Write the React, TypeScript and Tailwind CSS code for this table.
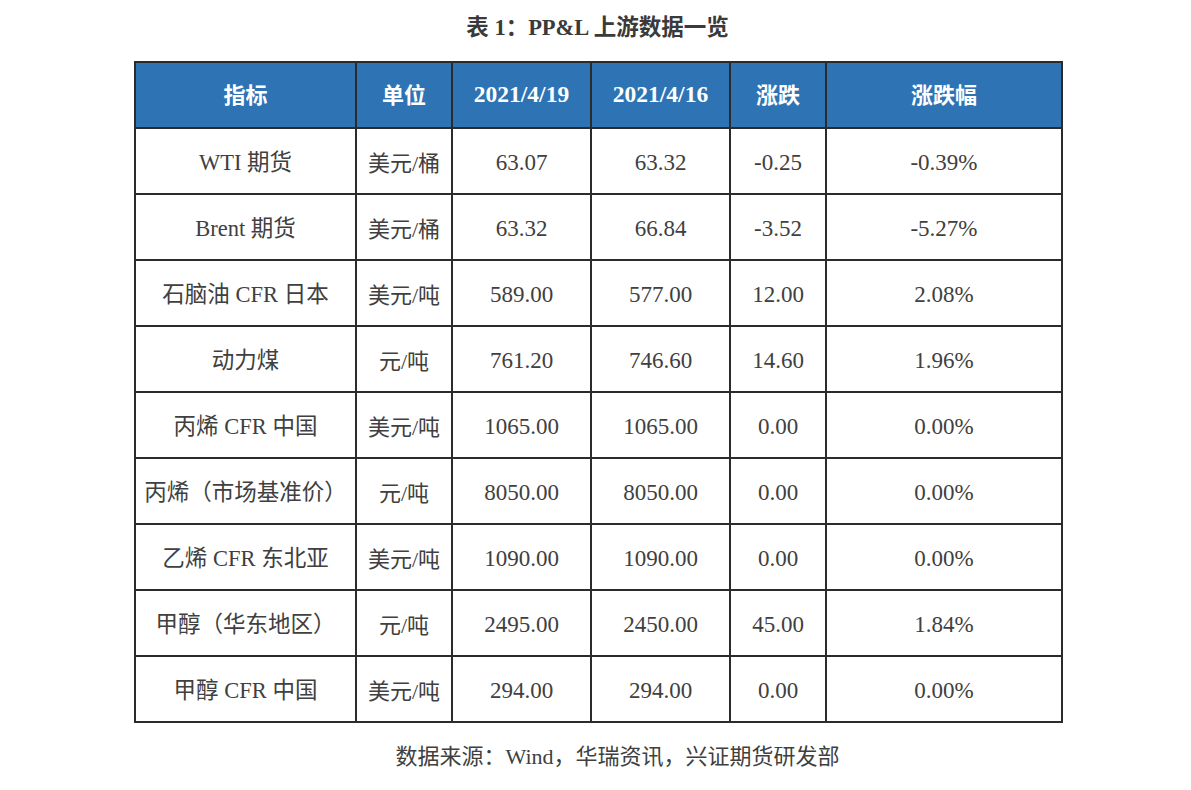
import React from "react";

const rows: string[][] = [
  ["WTI 期货", "美元/桶", "63.07", "63.32", "-0.25", "-0.39%"],
  ["Brent 期货", "美元/桶", "63.32", "66.84", "-3.52", "-5.27%"],
  ["石脑油 CFR 日本", "美元/吨", "589.00", "577.00", "12.00", "2.08%"],
  ["动力煤", "元/吨", "761.20", "746.60", "14.60", "1.96%"],
  ["丙烯 CFR 中国", "美元/吨", "1065.00", "1065.00", "0.00", "0.00%"],
  ["丙烯（市场基准价）", "元/吨", "8050.00", "8050.00", "0.00", "0.00%"],
  ["乙烯 CFR 东北亚", "美元/吨", "1090.00", "1090.00", "0.00", "0.00%"],
  ["甲醇（华东地区）", "元/吨", "2495.00", "2450.00", "45.00", "1.84%"],
  ["甲醇 CFR 中国", "美元/吨", "294.00", "294.00", "0.00", "0.00%"],
];

const headers = ["指标", "单位", "2021/4/19", "2021/4/16", "涨跌", "涨跌幅"];
const headerSize = ["text-[22px]", "text-[22px]", "text-[23.5px]", "text-[23.5px]", "text-[22px]", "text-[22px]"];
const cellSize = ["text-[22.5px]", "text-[22px]", "text-[23px]", "text-[23px]", "text-[23px]", "text-[23px]"];
const widths = ["w-[221px]", "w-[96px]", "w-[139px]", "w-[139px]", "w-[96px]", "w-[236px]"];

export default function App() {
  return (
    <div className="w-[1191px] h-[790px] bg-white flex flex-col items-center" style={{ fontFamily: '"Liberation Serif", "Noto Sans CJK SC", serif' }}>
      <div className="mt-[13px] h-[30px] flex items-center text-[22.5px] font-bold text-[#3a3a3a] ml-[4px]">
        表 1：PP&amp;L 上游数据一览
      </div>
      <table className="mt-[18px] ml-[6px] border-collapse table-fixed w-[927px] text-[#404040]">
        <colgroup>
          {widths.map((w, i) => (
            <col key={i} className={w} />
          ))}
        </colgroup>
        <thead>
          <tr className="h-[66px] bg-[#2e74b5]">
            {headers.map((h, i) => (
              <th key={i} className={`border-2 border-[#2b2b2b] text-white font-bold text-center p-0 ${headerSize[i]}`}>
                {h}
              </th>
            ))}
          </tr>
        </thead>
        <tbody>
          {rows.map((r, ri) => (
            <tr key={ri} className="h-[66px]">
              {r.map((c, ci) => (
                <td key={ci} className={`border-2 border-[#2b2b2b] text-center p-0 pt-[4px] whitespace-nowrap ${cellSize[ci]}`}>
                  {c}
                </td>
              ))}
            </tr>
          ))}
        </tbody>
      </table>
      <div className="mt-[17px] text-[22px] text-[#404040] ml-[44px]">
        数据来源：Wind，华瑞资讯，兴证期货研发部
      </div>
    </div>
  );
}
